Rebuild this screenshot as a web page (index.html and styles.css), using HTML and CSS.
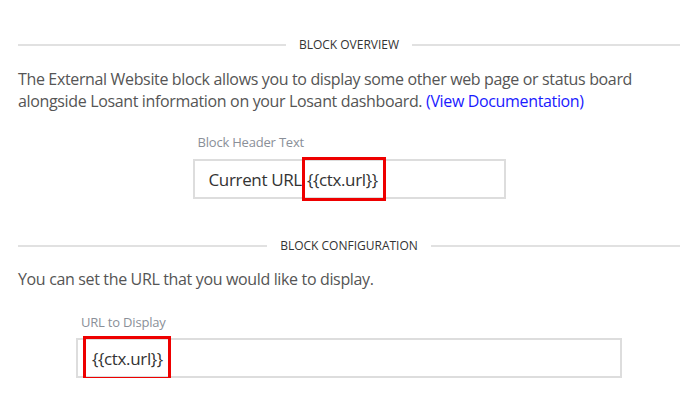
FILE: index.html
```html
<!DOCTYPE html>
<html>
<head>
<meta charset="utf-8">
<link rel="stylesheet" href="styles.css">
</head>
<body>
<div class="page">
  <div class="divider"><span class="divider-title">BLOCK OVERVIEW</span></div>
  <p class="desc desc-overview">The External Website block allows you to display some other web page or status board alongside Losant information on your Losant dashboard. <a class="doc-link" href="#">(View Documentation)</a></p>
  <div class="field field-header">
    <div class="field-label">Block Header Text</div>
    <div class="field-input">Current URL<span class="mark mark-header">{{ctx.url}}</span></div>
  </div>
  <div class="divider divider-config"><span class="divider-title">BLOCK CONFIGURATION</span></div>
  <p class="desc desc-config">You can set the URL that you would like to display.</p>
  <div class="field field-url">
    <div class="field-label">URL to Display</div>
    <div class="field-input"><span class="mark mark-url">{{ctx.url}}</span></div>
  </div>
</div>
</body>
</html>
```

FILE: styles.css
```css
html, body {
  margin: 0;
  padding: 0;
  background: #ffffff;
}
.page {
  padding: 37px 13px 0 18px;
  font-family: "Open Sans", "DejaVu Sans", sans-serif;
  color: #555555;
}
.divider {
  display: flex;
  align-items: center;
  gap: 13px;
  height: 16px;
}
.divider::before,
.divider::after {
  content: "";
  flex: 1;
  height: 2px;
  background: #e1e1e1;
}
.divider-title {
  font-size: 12px;
  line-height: 16px;
  color: #333333;
  white-space: nowrap;
}
.divider-config {
  margin-top: 39px;
}
.desc {
  margin: 15px 0 0 0;
  font-size: 16px;
  line-height: 22px;
  letter-spacing: -0.35px;
  color: #555555;
}
.desc-config {
  margin-top: 14px;
}
.doc-link {
  color: #1a1aff;
  text-decoration: none;
}
.field {
  margin-left: auto;
  margin-right: auto;
}
.field-header {
  width: 313px;
  margin-top: 21px;
}
.field-url {
  width: 546px;
  margin-top: 23px;
}
.field-label {
  padding-left: 5px;
  font-size: 13px;
  line-height: 18px;
  letter-spacing: -0.2px;
  color: #8a8f98;
}
.field-input {
  box-sizing: border-box;
  display: flex;
  align-items: center;
  height: 40px;
  margin-top: 8px;
  padding-left: 14px;
  border: 2px solid #dddddd;
  font-size: 17px;
  letter-spacing: -0.35px;
  color: #333333;
  white-space: nowrap;
}
.field-url .field-input {
  margin-top: 7px;
}
.mark {
  box-sizing: border-box;
  display: inline-flex;
  align-items: center;
  flex: none;
  height: 44px;
  border: 3px solid #ee0000;
}
.mark-header {
  margin-left: 0;
  padding: 0 5px 0 2px;
}
.mark-url {
  margin-left: -9px;
  padding: 0 5px 0 6px;
}
```
